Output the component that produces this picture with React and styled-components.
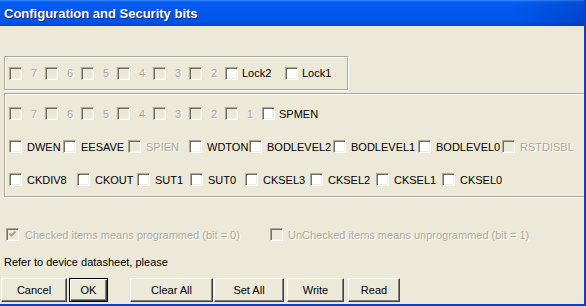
import styled, { createGlobalStyle } from "styled-components";

const GlobalStyle = createGlobalStyle`
  html, body {
    margin: 0;
    padding: 0;
    background: #ece9d8;
  }
`;

const Window = styled.div`
  width: 586px;
  height: 306px;
  box-sizing: border-box;
  display: flex;
  flex-direction: column;
  background: #ece9d8;
  border-right: 2px solid #0a3fd0;
  border-bottom: 2px solid #0a3fd0;
  overflow: hidden;
  font-family: "Liberation Sans", Arial, sans-serif;
  font-size: 11px;
  color: #000;
`;

const TitleBar = styled.div`
  height: 26px;
  flex: none;
  display: flex;
  align-items: center;
  padding-left: 4px;
  background:
    linear-gradient(to right, rgba(0, 0, 80, 0) 88%, rgba(0, 0, 80, 0.18) 100%),
    linear-gradient(to bottom, #3a8cff 0, #0a5cf0 2px, #0058ee 10px, #0055e8 21px, #0047d4 26px);
  color: #fff;
  font-weight: bold;
  font-size: 13px;
  text-shadow: 1px 1px 0 #0a2a8c;
`;

const Body = styled.div`
  flex: 1;
  display: flex;
  flex-direction: column;
  overflow: hidden;
`;

const Group = styled.div`
  margin: ${({ $top }) => $top}px 0 0 4px;
  width: ${({ $w }) => $w}px;
  padding: ${({ $pad }) => $pad || 0}px 0 0 4px;
  box-sizing: border-box;
  border: 1px solid #aca899;
  box-shadow: inset 1px 1px 0 #fff, 1px 1px 0 #fff;
`;

const Row = styled.div`
  height: ${({ $h }) => $h}px;
  display: flex;
  align-items: center;
`;

const Item = styled.label`
  flex: none;
  width: ${({ $w }) => ($w ? `${$w}px` : "auto")};
  display: flex;
  align-items: center;
  white-space: nowrap;
  overflow: hidden;
`;

const Box = styled.span`
  flex: none;
  width: 13px;
  height: 13px;
  box-sizing: border-box;
  display: flex;
  align-items: center;
  justify-content: center;
  border: 1px solid;
  border-color: #aca899 #fff #fff #aca899;
  box-shadow: inset 1px 1px 0 #716f64, inset -1px -1px 0 #f1efe2;
  background: ${({ $off }) => ($off ? "#ece9d8" : "#fff")};
`;

const Text = styled.span`
  margin-left: ${({ $gap }) => $gap || 5}px;
  color: ${({ $off }) => ($off ? "#aca899" : "#000")};
  text-shadow: ${({ $off }) => ($off ? "1px 1px 0 #fff" : "none")};
`;

const Legend = styled.div`
  margin-top: 31px;
  padding-left: 6px;
  display: flex;
  align-items: center;
  height: 13px;
`;

const Note = styled.div`
  margin-top: 15px;
  padding-left: 4px;
  line-height: 13px;
`;

const Buttons = styled.div`
  margin-top: 9px;
  padding-left: 1px;
  display: flex;
`;

const Button = styled.button`
  flex: none;
  margin-left: ${({ $gap }) => $gap || 0}px;
  width: ${({ $w }) => $w}px;
  height: 24px;
  padding: 0;
  box-sizing: border-box;
  font-family: "Liberation Sans", Arial, sans-serif;
  font-size: 11px;
  color: #000;
  background: #ece9d8;
  border: 1px solid;
  border-color: ${({ $default }) =>
    $default ? "#000" : "#fff #404040 #404040 #fff"};
  box-shadow: ${({ $default }) =>
    $default
      ? "inset 1px 1px 0 #fff, inset -1px -1px 0 #404040, inset -2px -2px 0 #808080"
      : "inset -1px -1px 0 #808080"};
`;

const Check = ({ label, w, off, gap, checked }) => (
  <Item $w={w}>
    <Box $off={off}>
      {checked && (
        <svg width="7" height="7" viewBox="0 0 7 7">
          <path d="M0.5 2.5 L2.5 4.5 L6.5 0.5" fill="none" stroke="#aca899" strokeWidth="2" />
        </svg>
      )}
    </Box>
    <Text $off={off} $gap={gap}>{label}</Text>
  </Item>
);

const digits = ["7", "6", "5", "4", "3", "2"];

const row3 = [
  ["DWEN", 54],
  ["EESAVE", 65],
  ["SPIEN", 61, true],
  ["WDTON", 60],
  ["BODLEVEL2", 84],
  ["BODLEVEL1", 85],
  ["BODLEVEL0", 84],
  ["RSTDISBL", 0, true],
];

const row4 = [
  ["CKDIV8", 68],
  ["CKOUT", 60],
  ["SUT1", 53],
  ["SUT0", 55],
  ["CKSEL3", 65],
  ["CKSEL2", 66],
  ["CKSEL1", 66],
  ["CKSEL0", 0],
];

export default function App() {
  return (
    <>
      <GlobalStyle />
      <Window>
        <TitleBar>Configuration and Security bits</TitleBar>
        <Body>
          <Group $top={30} $w={344}>
            <Row $h={32}>
              {digits.map((d) => (
                <Check key={d} label={d} w={36} off gap={9} />
              ))}
              <Check label="Lock2" w={60} gap={4} />
              <Check label="Lock1" gap={4} />
            </Row>
          </Group>
          <Group $top={3} $w={590} $pad={3}>
            <Row $h={33}>
              {[...digits, "1"].map((d, i) => (
                <Check key={d} label={d} w={i === 6 ? 37 : 36} off gap={9} />
              ))}
              <Check label="SPMEN" gap={4} />
            </Row>
            <Row $h={33}>
              {row3.map(([l, w, off]) => (
                <Check key={l} label={l} w={w} off={off} />
              ))}
            </Row>
            <Row $h={33}>
              {row4.map(([l, w]) => (
                <Check key={l} label={l} w={w} />
              ))}
            </Row>
          </Group>
          <Legend>
            <Check label="Checked items means programmed (bit = 0)" w={264} off checked gap={6} />
            <Check label="UnChecked items means unprogrammed (bit = 1)" off gap={5} />
          </Legend>
          <Note>Refer to device datasheet, please</Note>
          <Buttons>
            <Button $w={66}>Cancel</Button>
            <Button $w={39} $gap={2} $default>OK</Button>
            <Button $w={83} $gap={22}>Clear All</Button>
            <Button $w={70} $gap={1}>Set All</Button>
            <Button $w={57} $gap={3}>Write</Button>
            <Button $w={52} $gap={4}>Read</Button>
          </Buttons>
        </Body>
      </Window>
    </>
  );
}
